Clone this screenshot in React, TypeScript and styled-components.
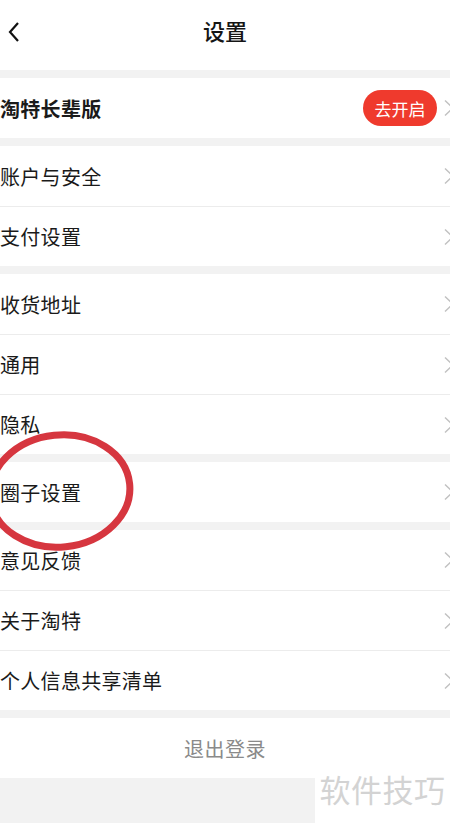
import React from "react";
import styled, { createGlobalStyle } from "styled-components";

const Global = createGlobalStyle`
  html, body { margin: 0; padding: 0; background: #f2f2f2; }
  body { font-family: "Noto Sans CJK SC", "Noto Sans", sans-serif; }
  * { box-sizing: border-box; }
`;

const Page = styled.div`
  position: relative;
  width: 450px;
  height: 823px;
  overflow: hidden;
  background: #f2f2f2;
  display: flex;
  flex-direction: column;
  gap: 8px;
`;

const NavBar = styled.header`
  height: 70px;
  background: #fff;
  display: grid;
  grid-template-columns: 60px 1fr 60px;
  align-items: center;
`;

const BackButton = styled.div`
  display: flex;
  align-items: center;
  padding-left: 7px;
  padding-bottom: 6px;
`;

const Title = styled.h1`
  margin: 0;
  text-align: center;
  font-size: 22px;
  font-weight: 500;
  color: #151515;
  padding-bottom: 10px;
`;

const Section = styled.section`
  background: #fff;
  display: flex;
  flex-direction: column;
`;

const Row = styled.div<{ $first?: boolean }>`
  height: 60px;
  display: flex;
  align-items: center;
  border-top: ${(p) => (p.$first ? "none" : "1px solid #ececec")};
`;

const Label = styled.span<{ $bold?: boolean }>`
  flex: 1;
  font-size: 20px;
  color: #1a1a1a;
  font-weight: ${(p) => (p.$bold ? 700 : 400)};
  letter-spacing: 0.3px;
`;

const Badge = styled.span`
  height: 36px;
  width: 74px;
  border-radius: 18px;
  background: #ef3a2d;
  color: #fff;
  font-size: 17px;
  display: flex;
  align-items: center;
  justify-content: center;
  margin-right: 6px;
`;

const ChevronBox = styled.svg`
  width: 12px;
  height: 18px;
  margin-right: -5px;
  flex: none;
`;

const Logout = styled.div`
  height: 60px;
  background: #fff;
  display: flex;
  align-items: center;
  justify-content: center;
  font-size: 20px;
  color: #8a8a8a;
  letter-spacing: 0.5px;
`;

const Watermark = styled.div`
  position: absolute;
  right: 0;
  bottom: 0;
  width: 135px;
  height: 46px;
  background: #fff;
  display: flex;
  justify-content: center;
  align-items: flex-start;
  font-size: 31px;
  line-height: 1;
  color: #d3d3d3;
`;

const WatermarkText = styled.span`
  margin-top: -4px;
  letter-spacing: 0.5px;
`;

const Annotation = styled.svg`
  position: absolute;
  left: 0;
  top: 0;
  width: 450px;
  height: 823px;
  pointer-events: none;
`;

const Chevron = () => (
  <ChevronBox viewBox="0 0 12 18">
    <polyline points="2,1.5 10,9 2,16.5" fill="none" stroke="#c2c2c2" strokeWidth="1.5" />
  </ChevronBox>
);

type Item = { label: string; bold?: boolean; badge?: string };

const sections: Item[][] = [
  [{ label: "淘特长辈版", bold: true, badge: "去开启" }],
  [{ label: "账户与安全" }, { label: "支付设置" }],
  [{ label: "收货地址" }, { label: "通用" }, { label: "隐私" }],
  [{ label: "圈子设置" }],
  [{ label: "意见反馈" }, { label: "关于淘特" }, { label: "个人信息共享清单" }],
];

export default function App() {
  return (
    <>
      <Global />
      <Page>
        <NavBar>
          <BackButton>
            <svg width="14" height="22" viewBox="0 0 14 22">
              <polyline points="11,2 3,11 11,20" fill="none" stroke="#111" strokeWidth="2.2" />
            </svg>
          </BackButton>
          <Title>设置</Title>
          <div />
        </NavBar>
        {sections.map((items, i) => (
          <Section key={i}>
            {items.map((it, j) => (
              <Row key={it.label} $first={j === 0}>
                <Label $bold={it.bold}>{it.label}</Label>
                {it.badge && <Badge>{it.badge}</Badge>}
                <Chevron />
              </Row>
            ))}
          </Section>
        ))}
        <Logout>退出登录</Logout>
        <Annotation viewBox="0 0 450 823">
          <ellipse
            cx="60"
            cy="491"
            rx="70"
            ry="56"
            fill="none"
            stroke="#d6363f"
            strokeWidth="7"
            transform="rotate(-6 60 491)"
          />
        </Annotation>
        <Watermark>
          <WatermarkText>软件技巧</WatermarkText>
        </Watermark>
      </Page>
    </>
  );
}
